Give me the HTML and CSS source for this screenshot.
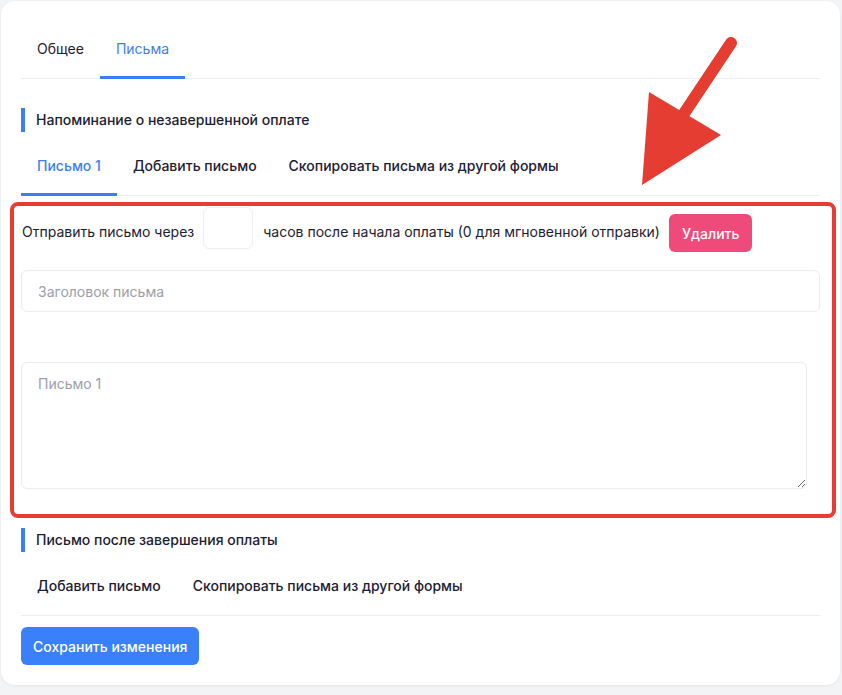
FILE: index.html
```html
<!DOCTYPE html>
<html lang="ru">
<head>
    <meta charset="UTF-8">
    <meta name="viewport" content="width=device-width, initial-scale=1.0">
    <title>Настройки формы — письма</title>
    <link rel="stylesheet" href="styles.css">
</head>
<body>

<div class="card">
    <!-- Верхние вкладки -->
    <div class="tabs">
        <a href="#" class="tab">Общее</a>
        <a href="#" class="tab active">Письма</a>
    </div>

    <!-- Напоминание -->
    <div class="section-title">Напоминание о незавершенной оплате</div>
    <div class="tabs sub-tabs">
        <a href="#" class="tab active">Письмо 1</a>
        <a href="#" class="tab">Добавить письмо</a>
        <a href="#" class="tab">Скопировать письма из другой формы</a>
    </div>

    <div class="letter">
        <div class="delay-row">
            <span class="delay-label">Отправить письмо через</span>
            <input type="text" class="delay-input">
            <span class="delay-label">часов после начала оплаты (0 для мгновенной отправки)</span>
            <button class="btn btn-danger">Удалить</button>
        </div>
        <input type="text" class="field" placeholder="Заголовок письма">
        <textarea class="field textarea" placeholder="Письмо 1"></textarea>
    </div>

    <!-- Письмо после оплаты -->
    <div class="section-title second">Письмо после завершения оплаты</div>
    <div class="tabs sub-tabs">
        <a href="#" class="tab">Добавить письмо</a>
        <a href="#" class="tab">Скопировать письма из другой формы</a>
    </div>

    <div class="actions">
        <button class="btn btn-primary">Сохранить изменения</button>
    </div>

    <!-- выделение -->
    <div class="highlight"></div>
</div>

<svg class="arrow" width="842" height="695" viewBox="0 0 842 695">
    <line x1="731" y1="43" x2="675" y2="127" stroke="#e53d32" stroke-width="12" stroke-linecap="round"/>
    <polygon points="649,92 721,135 642,185" fill="#e53d32"/>
</svg>

</body>
</html>
```

FILE: styles.css
```css
/* общий фон */
body {
    margin: 0;
    padding: 1px 2px 10px 1px;
    background: #f3f4f6;
    font-family: Inter, "Noto Sans", sans-serif;
    font-size: 14px;
    color: #1c2033;
}

.card {
    position: relative;
    background: #fff;
    border-radius: 14px;
    padding: 20px;
    box-shadow: 0 1px 3px rgba(0, 0, 0, 0.06);
}

/* вкладки */
.tabs {
    display: flex;
    border-bottom: 1px solid #eceef2;
}

.tab {
    display: block;
    padding: 18px 16px 17px;
    line-height: 20px;
    color: #1c2033;
    text-decoration: none;
    border-bottom: 3px solid transparent;
    margin-bottom: -1px;
    white-space: nowrap;
}

.tab.active {
    color: #3b7ff6;
    border-bottom-color: #3b7ff6;
}

.sub-tabs .tab {
    font-weight: 500;
}

/* заголовки блоков */
.section-title {
    margin-top: 29px;
    border-left: 4px solid #3b7ff6;
    padding-left: 11px;
    line-height: 24px;
    font-weight: 500;
    margin-bottom: 6px;
}

.section-title.second {
    margin-top: 39px;
}

/* письмо */
.letter {
    padding-top: 11px;
}

.delay-row {
    display: flex;
    align-items: flex-start;
    gap: 9px;
    margin-bottom: 18px;
    white-space: nowrap;
}

.delay-label {
    margin-top: 15px;
    line-height: 20px;
    padding-left: 1px;
}

.delay-input {
    width: 50px;
    height: 42px;
    box-sizing: border-box;
    border: 1px solid #eceef2;
    border-radius: 6px;
    margin: 0;
}

.field {
    display: block;
    width: 100%;
    box-sizing: border-box;
    border: 1px solid #eaecf0;
    border-radius: 6px;
    font-family: inherit;
    font-size: 14px;
    color: #1c2033;
    padding: 0 16px;
    height: 42px;
    margin: 0;
}

.field::placeholder {
    color: #9aa0ab;
}

.textarea {
    width: 786px;
    height: 127px;
    margin-top: 50px;
    padding: 11px 16px;
    resize: vertical;
    line-height: 20px;
}

/* кнопки */
.btn {
    border: none;
    border-radius: 6px;
    color: #fff;
    font-family: inherit;
    font-size: 14px;
    font-weight: 500;
    height: 38px;
    cursor: pointer;
    white-space: nowrap;
}

.btn-danger {
    background: #ee4b7b;
    margin-top: 7px;
    padding: 0 13px;
}

.actions {
    padding-top: 11px;
}

.btn-primary {
    background: #3b80fb;
    padding: 0 12px;
}

/* красная рамка-выделение */
.highlight {
    position: absolute;
    left: 9px;
    top: 201px;
    width: 826px;
    height: 316px;
    box-sizing: border-box;
    border: 4px solid #e53d32;
    border-radius: 8px;
    pointer-events: none;
}

.arrow {
    position: absolute;
    left: 0;
    top: 0;
    pointer-events: none;
}
```
